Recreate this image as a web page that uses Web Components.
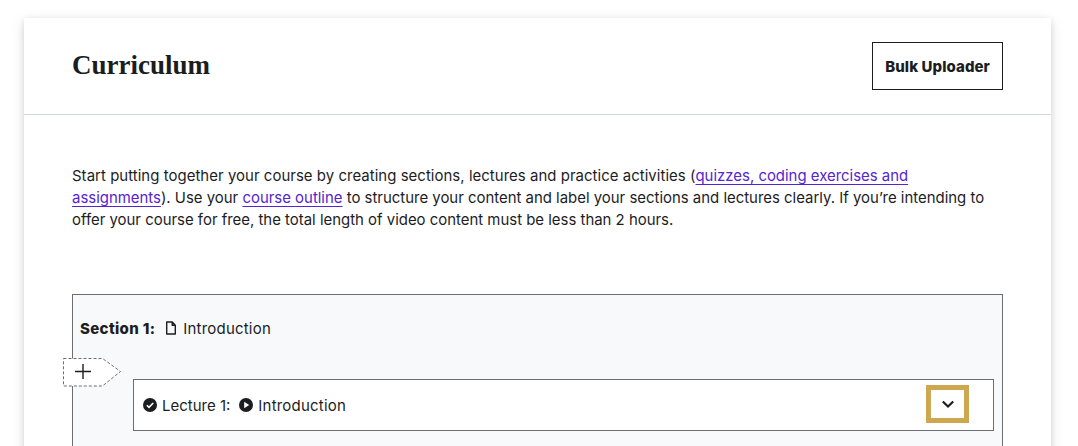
<!DOCTYPE html>
<html lang="en">
<head>
<meta charset="utf-8">
<title>Curriculum</title>
<style>
html, body { margin: 0; height: 446px; overflow: hidden; background: #fff; }
body { font-family: Inter, "Liberation Sans", sans-serif; color: #1c1d1f; }
a { color: #5624d0; text-decoration: underline 1px; text-underline-offset: 3px; }
.lead { letter-spacing: .05px; }
</style>
</head>
<body>
<curriculum-page>
  <curriculum-header slot="header" title="Curriculum" action="Bulk Uploader"></curriculum-header>
  <p slot="intro"><span class="lead">Start putting together your course by creating sections, lectures and practice activities (</span><a href="#">quizzes, coding exercises and assignments</a>). Use your <a href="#">course outline</a> to structure your content and label your sections and lectures clearly. If you’re intending to offer your course for free, the total length of video content must be less than 2 hours.</p>
  <curriculum-section slot="section" number="1" name="Introduction">
    <curriculum-lecture number="1" name="Introduction"></curriculum-lecture>
  </curriculum-section>
</curriculum-page>

<script>
const pageTemplate = document.createElement("template");
pageTemplate.innerHTML = `
<style>
:host { display: block; padding: 18px 27px 0 24px; }
.card { background: white; box-shadow: 0 2px 6px rgba(0,0,0,.12), 0 4px 14px rgba(0,0,0,.1); }
.content { padding: 50px 48px 0; }
::slotted(p) { margin: 0 0 63px; font-size: 14.93px; line-height: 22px; }
</style>
<div class="card">
  <slot name="header"></slot>
  <div class="content">
    <slot name="intro"></slot>
    <slot name="section"></slot>
  </div>
</div>`;

class CurriculumPage extends HTMLElement {
  constructor() {
    super();
    this.attachShadow({ mode: "open" });
    this.shadowRoot.appendChild(pageTemplate.content.cloneNode(true));
  }
}

const headerTemplate = document.createElement("template");
headerTemplate.innerHTML = `
<style>
:host {
  display: flex;
  align-items: center;
  justify-content: space-between;
  height: 96px;
  padding: 0 48px;
  border-bottom: 1px solid #d1d7dc;
}
h2 { margin: 0 0 2px; font: 700 27px "Liberation Serif", serif; }
button {
  height: 48px;
  padding: 0 12px;
  color: #1c1d1f;
  background-color: white;
  border: 1px solid #1c1d1f;
  font: 800 15px Inter, sans-serif;
  letter-spacing: .08px;
}
</style>
<h2 id="title"></h2>
<button id="action"></button>`;

class CurriculumHeader extends HTMLElement {
  constructor() {
    super();
    this.attachShadow({ mode: "open" });
    this.shadowRoot.appendChild(headerTemplate.content.cloneNode(true));
  }

  connectedCallback() {
    this.shadowRoot.getElementById("title").textContent = this.getAttribute("title");
    this.shadowRoot.getElementById("action").textContent = this.getAttribute("action");
  }
}

const sectionTemplate = document.createElement("template");
sectionTemplate.innerHTML = `
<style>
:host {
  display: block;
  position: relative;
  height: 300px;
  background: #f7f9fa;
  border: 1px solid #6a6f73;
  padding: 0 8px 0 60px;
}
.title {
  display: flex;
  align-items: center;
  height: 66px;
  margin-left: -53px;
  font-size: 15px;
}
b { margin-right: 9px; font-weight: 800; letter-spacing: .35px; }
.title svg { margin-right: 5px; }
.title span { letter-spacing: .2px; }
.insert {
  position: absolute;
  left: -10px;
  top: 63px;
}
.list { margin-top: 18px; }
</style>
<div class="title">
  <b id="label"></b>
  <svg width="14" height="14" viewBox="0 0 14 14" fill="none" stroke="#1c1d1f" stroke-width="1.4"><path d="M2.7 1h5.600l3 3.200v8.800H2.700z M8.200 1v3.300h3.100" stroke-linejoin="round"/></svg>
  <span id="name"></span>
</div>
<svg class="insert" width="60" height="30" viewBox="0 0 60 30" fill="#fff" stroke="#6a6f73" stroke-dasharray="3 2"><path d="M.5.5h39l18 13-18 14.500H.5z"/><path d="M12 13.500h16M20 6v15" stroke="#1c1d1f" stroke-width="1.4" stroke-dasharray="none"/></svg>
<div class="list"><slot></slot></div>`;

class CurriculumSection extends HTMLElement {
  constructor() {
    super();
    this.attachShadow({ mode: "open" });
    this.shadowRoot.appendChild(sectionTemplate.content.cloneNode(true));
  }

  connectedCallback() {
    this.shadowRoot.getElementById("label").textContent = `Section ${this.getAttribute("number")}:`;
    this.shadowRoot.getElementById("name").textContent = this.getAttribute("name");
  }
}

const lectureTemplate = document.createElement("template");
lectureTemplate.innerHTML = `
<style>
:host {
  display: flex;
  align-items: center;
  height: 50px;
  padding: 0 24px 0 9px;
  background: white;
  border: 1px solid #6a6f73;
  font-size: 15px;
}
svg { flex: none; }
.label { margin: 0 9px 0 5px; }
.name { margin-left: 5px; flex: 1; letter-spacing: .2px; }
button {
  display: flex;
  align-items: center;
  justify-content: center;
  width: 43px;
  height: 38px;
  margin-bottom: 2px;
  padding: 0;
  background: white;
  border: 5px solid #cda850;
}
</style>
<svg width="14" height="14" viewBox="0 0 14 14"><circle cx="7" cy="7" r="7" fill="#1c1d1f"/><path d="M3.8 7.2l2.2 2.2 4.200-4.400" fill="none" stroke="#fff" stroke-width="1.6"/></svg>
<span class="label" id="label"></span>
<svg width="14" height="14" viewBox="0 0 14 14"><circle cx="7" cy="7" r="7" fill="#1c1d1f"/><path d="M5.200 3.800l5 3.200-5 3.200z" fill="#fff"/></svg>
<span class="name" id="name"></span>
<button aria-label="Expand">
  <svg width="14" height="10" viewBox="0 0 14 10" fill="none" stroke="#1c1d1f" stroke-width="2.2"><path d="M1.800 2.500l5.200 5 5.200-5"/></svg>
</button>`;

class CurriculumLecture extends HTMLElement {
  constructor() {
    super();
    this.attachShadow({ mode: "open" });
    this.shadowRoot.appendChild(lectureTemplate.content.cloneNode(true));
  }

  connectedCallback() {
    this.shadowRoot.getElementById("label").textContent = `Lecture ${this.getAttribute("number")}:`;
    this.shadowRoot.getElementById("name").textContent = this.getAttribute("name");
  }
}

window.customElements.define("curriculum-page", CurriculumPage);
window.customElements.define("curriculum-header", CurriculumHeader);
window.customElements.define("curriculum-section", CurriculumSection);
window.customElements.define("curriculum-lecture", CurriculumLecture);
</script>
</body>
</html>
